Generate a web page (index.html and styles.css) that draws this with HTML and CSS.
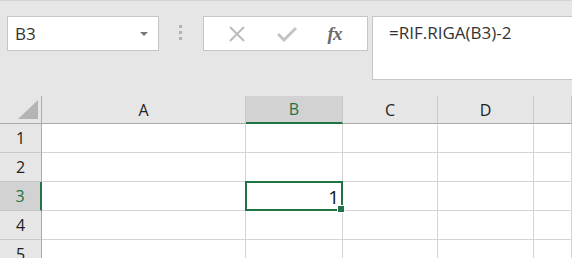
FILE: index.html
```html
<!DOCTYPE html>
<html lang="it">
<head>
    <meta charset="UTF-8">
    <title>Foglio1</title>
    <link rel="stylesheet" href="styles.css">
</head>
<body>
    <div class="formula-bar">
        <div class="name-box">
            <span>B3</span>
            <span class="arrow"></span>
        </div>
        <div class="grip"><i></i><i></i><i></i></div>
        <div class="actions">
            <svg width="18" height="16" viewBox="0 0 18 16"><path d="M2 1 L16 15 M16 1 L2 15" stroke="#bdbdbd" stroke-width="2" fill="none"/></svg>
            <svg width="20" height="16" viewBox="0 0 20 16"><path d="M1 8 L7 14 L19 2" stroke="#c4c4c4" stroke-width="3" fill="none"/></svg>
            <span class="fx">fx</span>
        </div>
        <div class="formula">=RIF.RIGA(B3)-2</div>
    </div>

    <div class="sheet">
        <div class="corner"><span></span></div>
        <div class="col-head">A</div>
        <div class="col-head active">B</div>
        <div class="col-head">C</div>
        <div class="col-head">D</div>
        <div class="col-head"></div>

        <div class="row-head">1</div>
        <div class="cell"></div><div class="cell"></div><div class="cell"></div><div class="cell"></div><div class="cell"></div>

        <div class="row-head">2</div>
        <div class="cell"></div><div class="cell"></div><div class="cell"></div><div class="cell"></div><div class="cell"></div>

        <div class="row-head active">3</div>
        <div class="cell"></div>
        <div class="cell selected">1<span class="handle"></span></div>
        <div class="cell"></div><div class="cell"></div><div class="cell"></div>

        <div class="row-head">4</div>
        <div class="cell"></div><div class="cell"></div><div class="cell"></div><div class="cell"></div><div class="cell"></div>

        <div class="row-head">5</div>
        <div class="cell"></div><div class="cell"></div><div class="cell"></div><div class="cell"></div><div class="cell"></div>
    </div>
</body>
</html>
```

FILE: styles.css
```css
body {
    margin: 0;
    height: 258px;
    overflow: hidden;
    background-color: #e6e6e6;
    border-top: 1px solid #d4d4d4;
    font-family: "Open Sans", "Noto Sans", sans-serif;
    color: #222;
}

.formula-bar {
    display: flex;
    align-items: flex-start;
    height: 79px;
    padding-top: 15px;
    box-sizing: border-box;
}

.name-box {
    display: flex;
    align-items: center;
    justify-content: space-between;
    box-sizing: border-box;
    width: 152px;
    height: 35px;
    margin-left: 7px;
    padding: 0 10px 0 7px;
    background-color: white;
    border: 1px solid #c6c6c6;
    font-size: 17px;
    color: #333;
}

.arrow {
    width: 0;
    height: 0;
    border-left: 4px solid transparent;
    border-right: 4px solid transparent;
    border-top: 4px solid #777;
}

.grip {
    display: flex;
    flex-direction: column;
    gap: 3px;
    margin: 9px 21px 0 20px;
}

.grip i {
    width: 3px;
    height: 3px;
    background-color: #b3b3b3;
}

.actions {
    display: flex;
    align-items: center;
    justify-content: space-around;
    box-sizing: border-box;
    width: 165px;
    height: 35px;
    padding: 0 10px 0 8px;
    background-color: white;
    border: 1px solid #c6c6c6;
}

.fx {
    font-family: "Liberation Serif", serif;
    font-style: italic;
    font-weight: bold;
    font-size: 19px;
    color: #6a6a6a;
    letter-spacing: -1px;
}

.formula {
    flex: 1;
    box-sizing: border-box;
    height: 64px;
    margin-left: 4px;
    padding: 4px 0 0 16px;
    background-color: white;
    border: 1px solid #c6c6c6;
    border-right: none;
    font-size: 17px;
    color: #333;
}

.sheet {
    display: grid;
    grid-template-columns: 42px 204px 97px 95px 96px 1fr;
    grid-template-rows: 28px repeat(5, 29px);
    margin-top: 16px;
}

.corner {
    display: flex;
    align-items: flex-end;
    justify-content: flex-end;
    padding: 0 3px 4px 0;
    border-right: 1px solid #ababab;
    border-bottom: 1px solid #ababab;
}

.corner span {
    width: 0;
    height: 0;
    border-left: 20px solid transparent;
    border-bottom: 19px solid #b4b4b4;
}

.col-head {
    display: flex;
    align-items: center;
    justify-content: center;
    font-size: 16px;
    color: #222;
    border-right: 1px solid #c8c8c8;
    border-bottom: 1px solid #ababab;
}

.col-head.active {
    background-color: #d2d2d2;
    color: #217346;
    border-bottom: 2px solid #217346;
}

.row-head {
    display: flex;
    align-items: center;
    justify-content: center;
    font-size: 16px;
    color: #222;
    border-right: 1px solid #ababab;
    border-bottom: 1px solid #c8c8c8;
}

.row-head.active {
    background-color: #d2d2d2;
    color: #217346;
    border-right: 2px solid #217346;
}

.cell {
    background-color: white;
    border-right: 1px solid #d4d4d4;
    border-bottom: 1px solid #d4d4d4;
}

.selected {
    position: relative;
    display: flex;
    align-items: flex-end;
    justify-content: flex-end;
    padding: 0 3px 0 0;
    font-size: 19px;
    color: #111;
}

.selected::before {
    content: "";
    position: absolute;
    top: -1px;
    left: -1px;
    right: -1px;
    bottom: -1px;
    border: 2px solid #217346;
}

.handle {
    position: absolute;
    right: -3px;
    bottom: -3px;
    width: 6px;
    height: 6px;
    background-color: #217346;
    border: 1px solid white;
}
```
